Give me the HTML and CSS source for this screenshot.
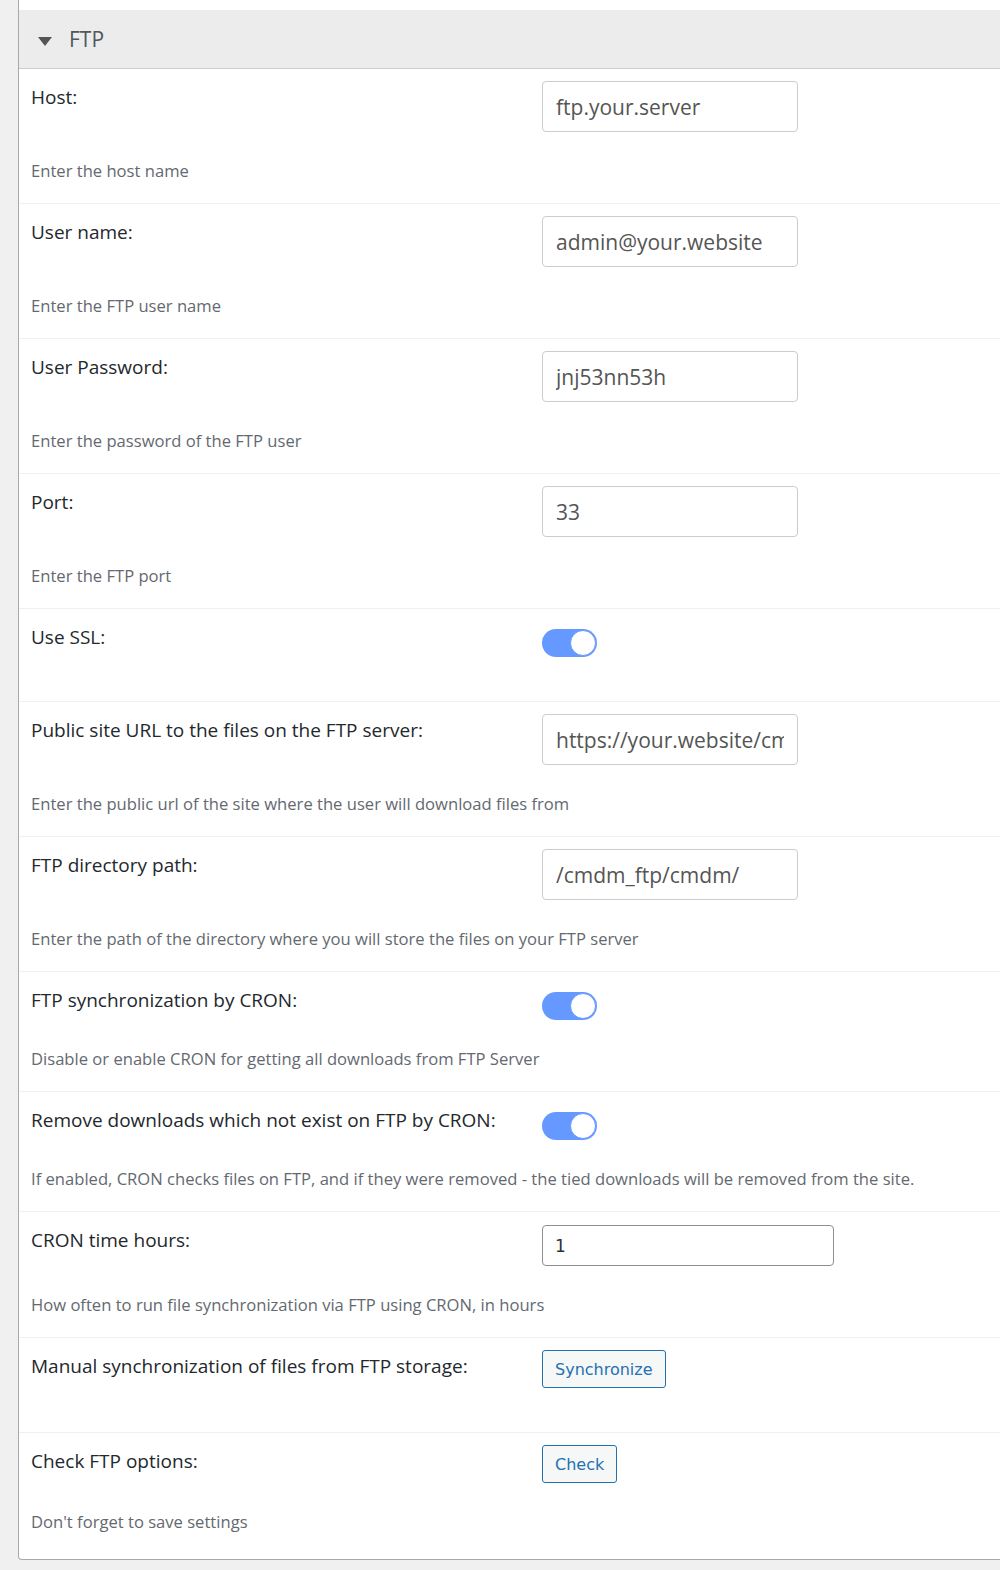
FILE: index.html
```html
<!DOCTYPE html>
<html lang="en">
<head>
    <meta charset="UTF-8">
    <meta name="viewport" content="width=device-width, initial-scale=1.0">
    <title>FTP Settings</title>
    <link rel="stylesheet" href="styles.css">
</head>
<body>
    <div class="panel">
        <!-- Section header -->
        <div class="panel-header">
            <span class="caret"></span>
            <span class="panel-title">FTP</span>
        </div>

        <div class="row">
            <div class="row-main">
                <label class="row-label" for="ftpHost">Host:</label>
                <input class="text-input" type="text" id="ftpHost" value="ftp.your.server">
            </div>
            <p class="row-desc">Enter the host name</p>
        </div>

        <div class="row">
            <div class="row-main">
                <label class="row-label" for="ftpUser">User name:</label>
                <input class="text-input" type="text" id="ftpUser" value="admin@your.website">
            </div>
            <p class="row-desc">Enter the FTP user name</p>
        </div>

        <div class="row">
            <div class="row-main">
                <label class="row-label" for="ftpPass">User Password:</label>
                <input class="text-input" type="text" id="ftpPass" value="jnj53nn53h">
            </div>
            <p class="row-desc">Enter the password of the FTP user</p>
        </div>

        <div class="row">
            <div class="row-main">
                <label class="row-label" for="ftpPort">Port:</label>
                <input class="text-input" type="text" id="ftpPort" value="33">
            </div>
            <p class="row-desc">Enter the FTP port</p>
        </div>

        <div class="row row-nodesc">
            <div class="row-main">
                <span class="row-label">Use SSL:</span>
                <span class="toggle-wrap"><span class="toggle on"><span class="knob"></span></span></span>
            </div>
        </div>

        <div class="row">
            <div class="row-main">
                <label class="row-label" for="ftpUrl">Public site URL to the files on the FTP server:</label>
                <input class="text-input" type="text" id="ftpUrl" value="https://your.website/cmdm_ftp/cmdm/">
            </div>
            <p class="row-desc">Enter the public url of the site where the user will download files from</p>
        </div>

        <div class="row">
            <div class="row-main">
                <label class="row-label" for="ftpDir">FTP directory path:</label>
                <input class="text-input" type="text" id="ftpDir" value="/cmdm_ftp/cmdm/">
            </div>
            <p class="row-desc">Enter the path of the directory where you will store the files on your FTP server</p>
        </div>

        <div class="row">
            <div class="row-main">
                <span class="row-label">FTP synchronization by CRON:</span>
                <span class="toggle-wrap"><span class="toggle on"><span class="knob"></span></span></span>
            </div>
            <p class="row-desc">Disable or enable CRON for getting all downloads from FTP Server</p>
        </div>

        <div class="row">
            <div class="row-main">
                <span class="row-label">Remove downloads which not exist on FTP by CRON:</span>
                <span class="toggle-wrap"><span class="toggle on"><span class="knob"></span></span></span>
            </div>
            <p class="row-desc">If enabled, CRON checks files on FTP, and if they were removed - the tied downloads will be removed from the site.</p>
        </div>

        <div class="row">
            <div class="row-main">
                <label class="row-label" for="cronHours">CRON time hours:</label>
                <input class="number-input" type="text" id="cronHours" value="1">
            </div>
            <p class="row-desc">How often to run file synchronization via FTP using CRON, in hours</p>
        </div>

        <div class="row row-nodesc">
            <div class="row-main">
                <span class="row-label">Manual synchronization of files from FTP storage:</span>
                <button class="wp-button">Synchronize</button>
            </div>
        </div>

        <div class="row row-last">
            <div class="row-main">
                <span class="row-label">Check FTP options:</span>
                <button class="wp-button">Check</button>
            </div>
            <p class="row-desc">Don't forget to save settings</p>
        </div>
    </div>
</body>
</html>
```

FILE: styles.css
```css
body {
    margin: 0;
    background-color: #f0f0f1;
    font-family: "Open Sans", "Noto Sans", sans-serif;
    color: #1d2327;
}

.panel {
    margin-left: 18px;
    padding-top: 10px;
    background-color: #fff;
    border-left: 1px solid #a7aaad;
    border-bottom: 1px solid #a7aaad;
    border-bottom-left-radius: 4px;
    padding-bottom: 5px;
}

.panel-header {
    height: 58px;
    display: flex;
    align-items: center;
    padding-left: 19px;
    background-color: #ececec;
    border-bottom: 1px solid #cccccc;
}

.caret {
    width: 0;
    height: 0;
    border-left: 7px solid transparent;
    border-right: 7px solid transparent;
    border-top: 9px solid #555;
    margin-top: 4px;
    margin-right: 17px;
}

.panel-title {
    font-size: 21px;
    color: #50575e;
}

.row {
    padding: 12px 12px 20px;
    border-bottom: 1px solid #f0f0f1;
}

.row-nodesc {
    padding-bottom: 44px;
}

.row-last {
    border-bottom: none;
}

.row-main {
    display: flex;
    align-items: flex-start;
}

.row-label {
    width: 511px;
    flex-shrink: 0;
    font-size: 19px;
    font-weight: 400;
    line-height: 32px;
    color: #23282d;
}

.row-desc {
    margin: 27px 0 0;
    font-size: 16.6px;
    line-height: 24px;
    color: #646970;
}

.text-input {
    width: 256px;
    height: 51px;
    box-sizing: border-box;
    padding: 0 13px;
    border: 1px solid #cccccc;
    border-radius: 4px;
    font-family: "Open Sans", "Noto Sans", sans-serif;
    font-size: 21px;
    color: #555;
    background-color: #fff;
}

.number-input {
    width: 292px;
    height: 41px;
    margin-top: 1px;
    box-sizing: border-box;
    padding: 0 12px;
    border: 1px solid #8c8f94;
    border-radius: 4px;
    font-family: "DejaVu Sans", sans-serif;
    font-size: 17px;
    color: #2c3338;
    background-color: #fff;
}

.toggle-wrap {
    display: block;
    height: 36px;
    padding-top: 8px;
    box-sizing: border-box;
}

.toggle {
    display: block;
    position: relative;
    width: 55px;
    height: 28px;
    border-radius: 14px;
    background-color: #6699ff;
}

.knob {
    position: absolute;
    top: 1px;
    right: 1px;
    width: 24px;
    height: 24px;
    border-radius: 50%;
    background-color: #fff;
    border: 1px solid #6699ff;
}

.wp-button {
    height: 38px;
    padding: 0 12px;
    border: 1px solid #2271b1;
    border-radius: 3px;
    background-color: #f6f7f7;
    color: #2271b1;
    font-family: "DejaVu Sans", sans-serif;
    font-size: 16px;
    cursor: pointer;
}
```
